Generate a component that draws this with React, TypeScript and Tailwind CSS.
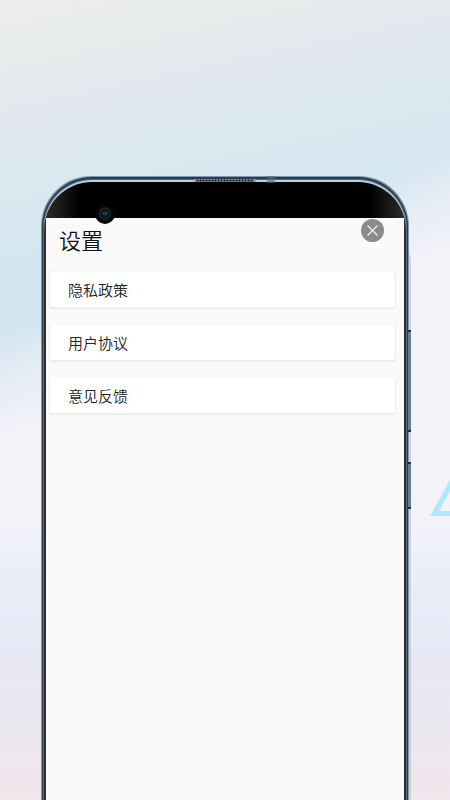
import type { ReactNode } from 'react';

const menuItems = ['隐私政策', '用户协议', '意见反馈'];

const Camera = () => (
    <svg className="absolute left-[54px] top-7 h-5 w-5" viewBox="0 0 20 20" aria-hidden="true">
        <circle cx="10" cy="10" r="10" fill="#020304" />
        <circle cx="10" cy="9.5" r="6.5" fill="#1c2024" />
        <circle cx="10" cy="9.5" r="4.2" fill="#07141c" />
        <ellipse cx="10" cy="9.5" rx="2.8" ry="1.7" fill="#0b5064" />
        <circle cx="10" cy="9.5" r="0.8" fill="#06222e" />
    </svg>
);

const Speaker = () => (
    <svg className="absolute left-1/2 top-0 -ml-[31px] h-[7px] w-[82px]" viewBox="0 0 82 7" aria-hidden="true">
        <rect x="0" y="3" width="62" height="3" rx="1" fill="#8fa6b8" />
        <path d="M2.5 4.5H60" stroke="#0c131b" strokeWidth="1.8" strokeDasharray="2 1" />
        <rect x="73" y="0" width="8" height="7" fill="#4d6a85" fillOpacity="0.6" />
    </svg>
);

const CloseIcon = () => (
    <svg className="h-full w-full" viewBox="0 0 24 24" fill="none" aria-hidden="true">
        <path d="M7.2 7.2L16.8 16.8M16.8 7.2L7.2 16.8" stroke="#fff" strokeWidth="1.3" strokeLinecap="round" />
    </svg>
);

const Triangle = () => (
    <svg className="absolute right-0 top-[480px] h-9 w-5" viewBox="0 0 20 36" aria-hidden="true">
        <path d="M20 0L0 36H20V31H9L20 11Z" fill="#aeebfa" />
    </svg>
);

const PhoneFrame = ({ children }: { children: ReactNode }) => (
    <div className="relative mx-[41px] mt-44 flex flex-1 flex-col rounded-t-[50px] bg-[#7f98ab] px-px pt-px shadow-[2px_38px_0_0_#d3d1d6]">
        <div className="flex flex-1 flex-col rounded-t-[50px] bg-[#2d3b48] px-px pt-0.5">
            <div className="flex flex-1 flex-col rounded-t-[49px] bg-[#566a7a] px-px pt-px">
                <div className="flex flex-1 flex-col rounded-t-[48px] bg-[#b3d0e5] pt-0.5">
                    <div className="flex flex-1 flex-col rounded-t-[48px] bg-[linear-gradient(90deg,#2e2e2e_0px,#000_36px,#000_calc(100%-36px),#2e2e2e_100%)] px-0.5 pt-9">
                        {children}
                    </div>
                </div>
            </div>
        </div>
        <Speaker />
        <Camera />
        <span className="absolute -right-0.5 top-[154px] h-[102px] w-[3px] border-y-2 border-[#1f2d3b] bg-[#637f98]" />
        <span className="absolute -right-0.5 top-[286px] h-[47px] w-[3px] border-y-2 border-[#1f2d3b] bg-[#637f98]" />
    </div>
);

const SettingsScreen = () => (
    <main className="flex-1 bg-[#fafafa] pl-1 pr-[9px]">
        <header className="flex items-start justify-between pl-[9px] pr-[11px] pt-px">
            <h1 className="mt-0.5 text-[22px] font-[350] leading-9 text-[#111]">设置</h1>
            <button type="button" aria-label="关闭" className="h-[23px] w-[23px] rounded-full bg-[#8b8b8b]">
                <CloseIcon />
            </button>
        </header>
        <nav className="mt-[15px] flex flex-col gap-[18px]">
            {menuItems.map((item) => (
                <button
                    key={item}
                    type="button"
                    className="h-[35px] w-full rounded-xs bg-white px-[18px] text-left text-[15px] font-[350] leading-5 text-[#222] shadow-[0_1px_2px_1px_rgba(0,0,0,0.06)]"
                >
                    {item}
                </button>
            ))}
        </nav>
    </main>
);

export default function App() {
    return (
        <div className="relative flex min-h-screen flex-col overflow-hidden bg-[linear-gradient(180deg,transparent_65%,#e9edf8_74%,#e7e8f5_82%,#ebe7ef_91%,#f0e6ec_100%),linear-gradient(157deg,transparent_34%,#e6edf5_39%,#f2f2f8_44%),linear-gradient(168deg,#ededec_0%,#e6ebeb_7%,#e1e8ee_15%,#dce9ef_19%,#d3e6f1_31%)] font-['Noto_Sans_CJK_SC',sans-serif]">
            <Triangle />
            <PhoneFrame>
                <SettingsScreen />
            </PhoneFrame>
        </div>
    );
}
